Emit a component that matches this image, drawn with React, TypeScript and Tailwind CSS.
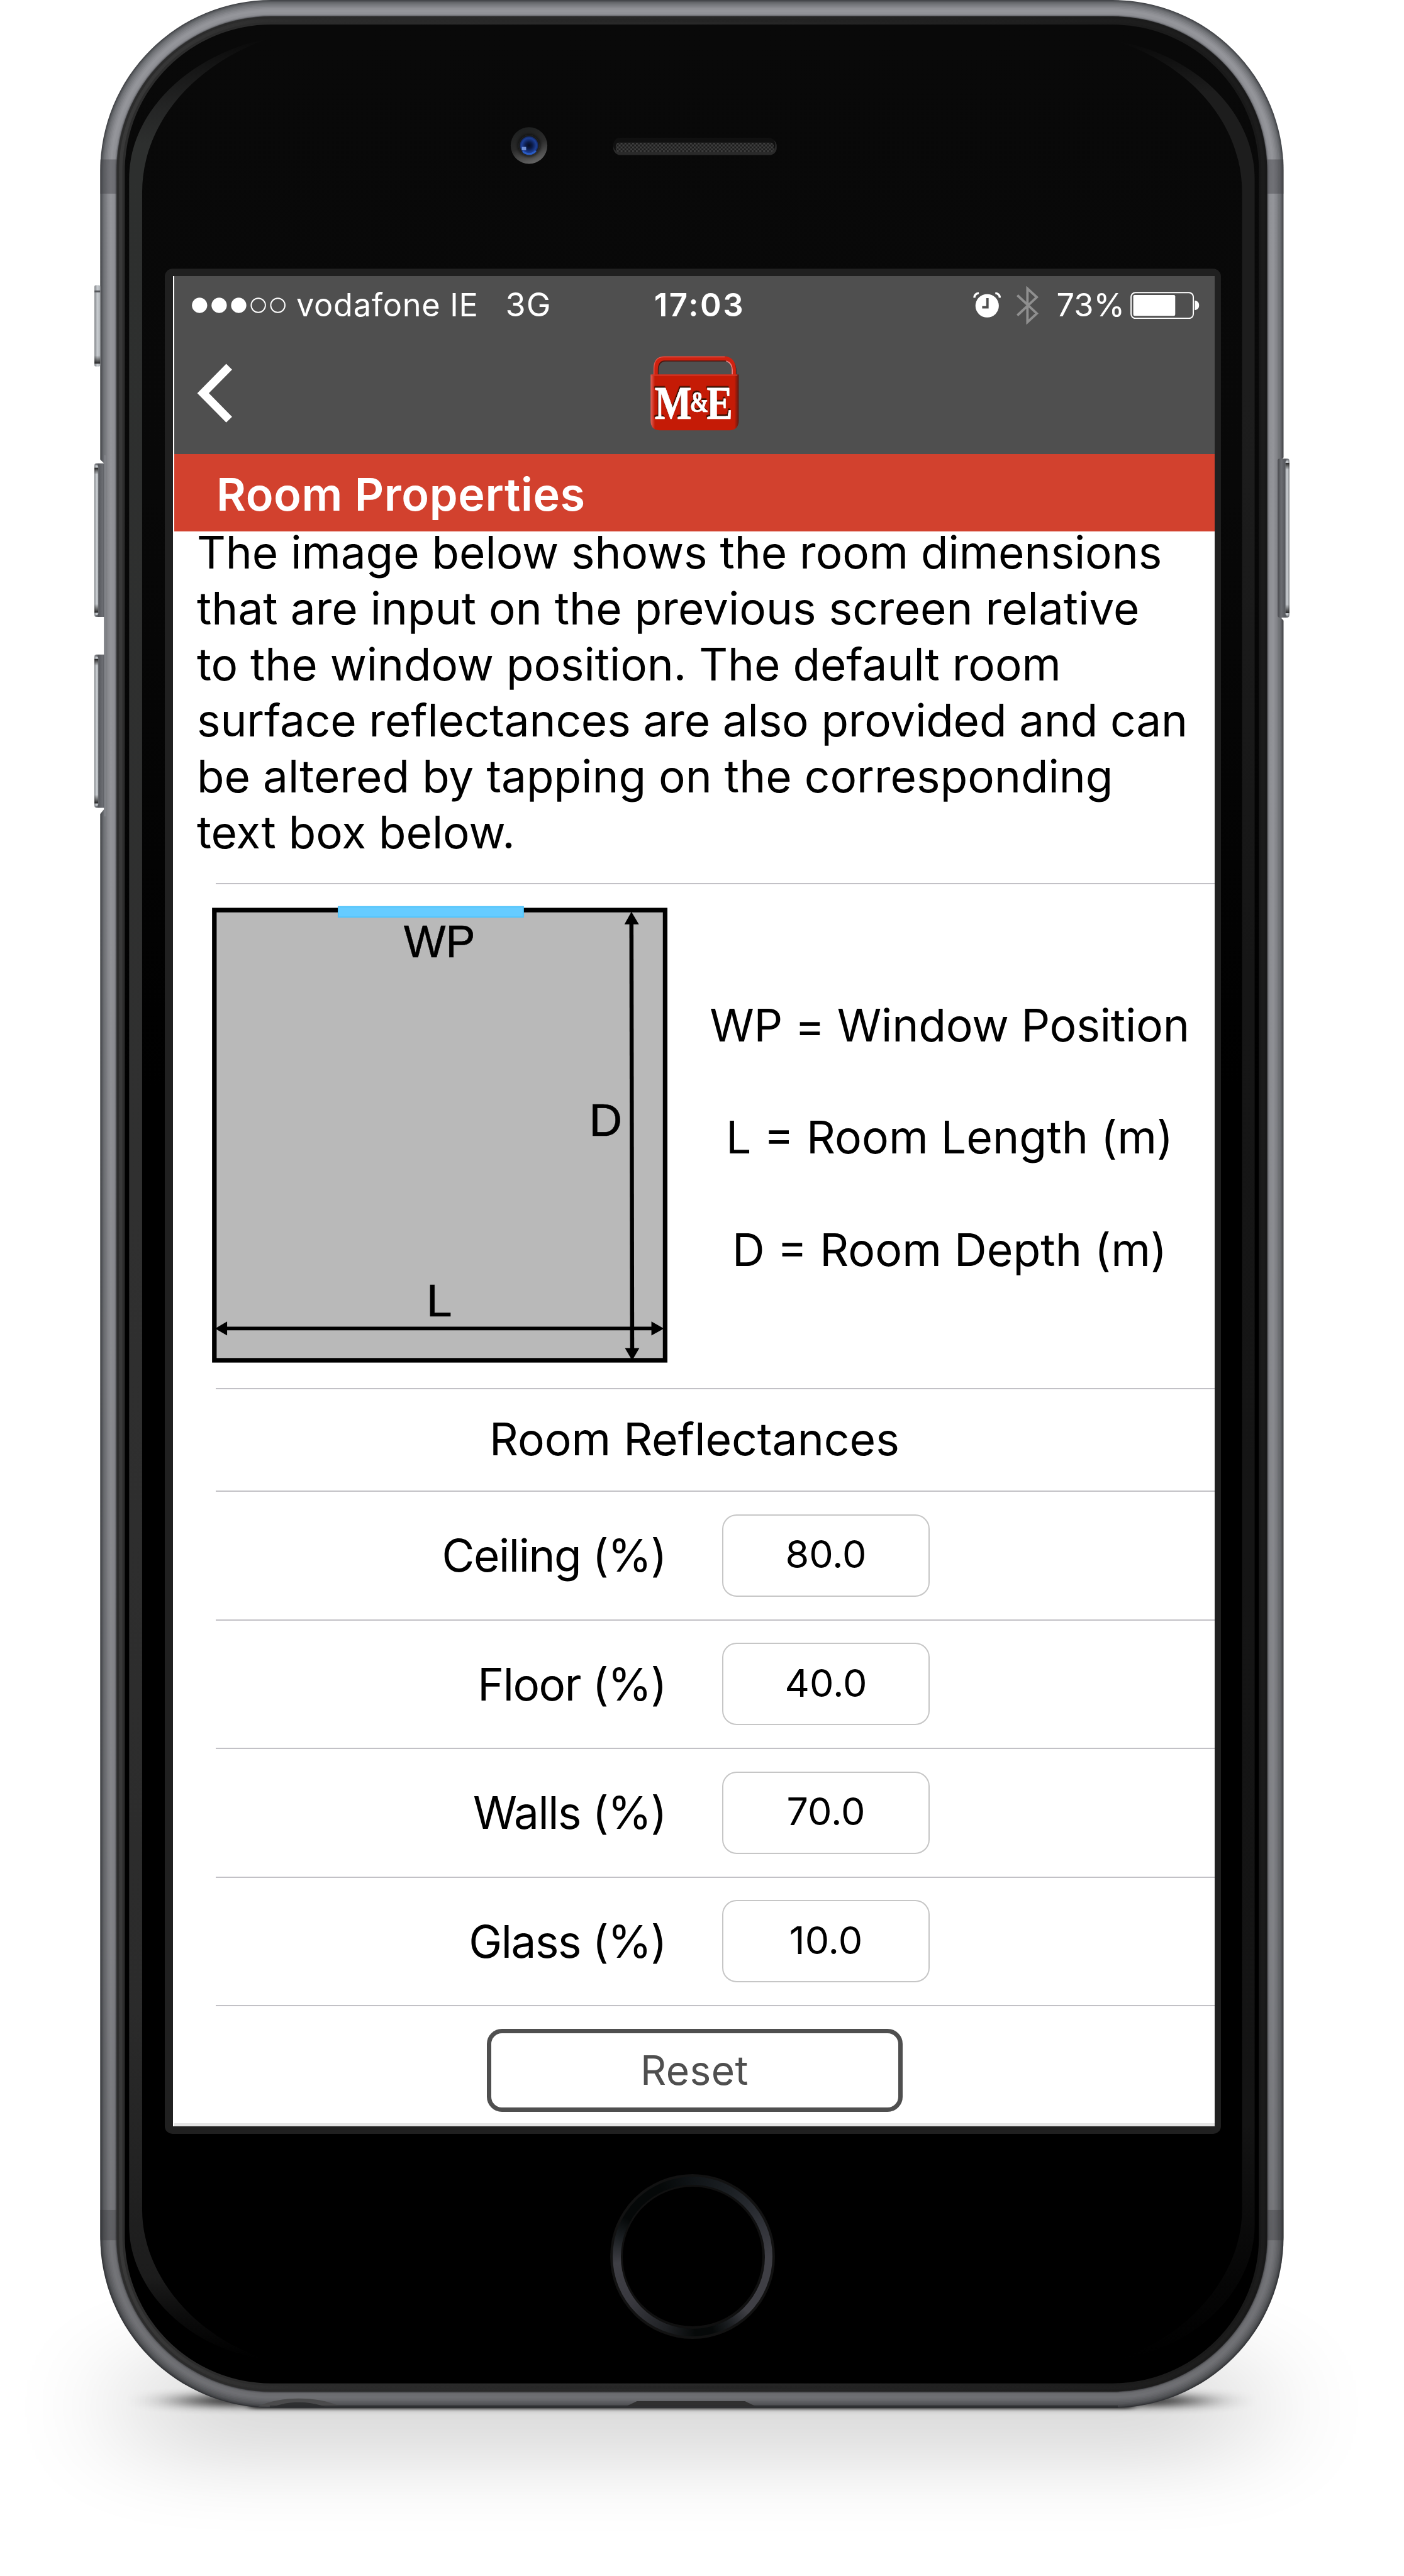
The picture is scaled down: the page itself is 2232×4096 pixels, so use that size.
import type { ReactNode } from "react";

const reflectances = [
  { label: "Ceiling (%)", value: "80.0" },
  { label: "Floor (%)", value: "40.0" },
  { label: "Walls (%)", value: "70.0" },
  { label: "Glass (%)", value: "10.0" },
];

// Metal rim shading, from the outer edge inwards: [inset, colour]
const rim: [number, string][] = [
  [0, "#434549"],
  [2, "#55575b"],
  [4, "#626468"],
  [6, "#6c6e72"],
  [8, "#75777b"],
  [11, "#7f8085"],
  [14, "#88898e"],
  [17, "#8f9095"],
  [20, "#94959a"],
  [25, "#919297"],
  [29, "#8a8b90"],
  [31, "#77787d"],
  [33, "#4c4d50"],
];

function RoundedLayer({ inset, fill }: { inset: number; fill: string }) {
  return (
    <rect
      x={208 + inset}
      y={inset}
      width={2456 - inset * 2}
      height={4999 - inset * 2}
      rx={355 - inset}
      fill={fill}
    />
  );
}

function SideButton({ x, y, h, flip }: { x: number; y: number; h: number; flip?: boolean }) {
  return (
    <g transform={flip ? `translate(${x + 20} ${y}) scale(-1 1)` : `translate(${x} ${y})`}>
      <rect x="0" y="0" width="24" height={h} rx="4" fill="url(#btnBase)" />
      <rect x="0" y="4" width="8" height={h - 8} rx="3" fill="url(#btnFace)" />
      <rect x="0" y="9" width="8" height="14" fill="url(#btnCapTop)" />
      <rect x="0" y={h - 27} width="8" height="18" fill="url(#btnCapBottom)" />
    </g>
  );
}

function Chassis() {
  return (
    <svg className="absolute inset-0 h-[4096px] w-[2232px]" viewBox="0 0 2914 5348" preserveAspectRatio="none" aria-hidden="true">
      <defs>
        <linearGradient id="rimShade" x1="0" y1="0" x2="0" y2="1">
          <stop offset="0" stopColor="#000" stopOpacity="0" />
          <stop offset="0.35" stopColor="#000" stopOpacity="0.02" />
          <stop offset="0.8" stopColor="#000" stopOpacity="0.13" />
          <stop offset="1" stopColor="#000" stopOpacity="0.26" />
        </linearGradient>
        <linearGradient id="ring" x1="0" y1="0" x2="1" y2="0">
          <stop offset="0" stopColor="#2c2c2c" />
          <stop offset="0.5" stopColor="#282828" />
          <stop offset="1" stopColor="#181818" />
        </linearGradient>
        <linearGradient id="ringMid" x1="0" y1="0" x2="1" y2="0">
          <stop offset="0" stopColor="#393939" />
          <stop offset="0.15" stopColor="#2c2c2c" />
          <stop offset="1" stopColor="#1b1b1b" />
        </linearGradient>
        <linearGradient id="glass" x1="0" y1="0" x2="0" y2="1">
          <stop offset="0" stopColor="#090909" />
          <stop offset="0.2" stopColor="#080808" />
          <stop offset="0.45" stopColor="#000" />
          <stop offset="1" stopColor="#000" />
        </linearGradient>
        <linearGradient id="glowLeft" gradientUnits="userSpaceOnUse" x1="0" y1="80" x2="0" y2="4897">
          <stop offset="0" stopColor="#303030" stopOpacity="0" />
          <stop offset="0.03" stopColor="#2b2c2c" stopOpacity="0.8" />
          <stop offset="0.045" stopColor="#2d2f2e" />
          <stop offset="0.5" stopColor="#303030" />
          <stop offset="0.85" stopColor="#2b2b2b" />
          <stop offset="0.965" stopColor="#1c1c1c" />
          <stop offset="1" stopColor="#101010" stopOpacity="0" />
        </linearGradient>
        <linearGradient id="glowRight" gradientUnits="userSpaceOnUse" x1="0" y1="85" x2="0" y2="4897">
          <stop offset="0" stopColor="#1e1e1e" stopOpacity="0" />
          <stop offset="0.022" stopColor="#1d1d1d" />
          <stop offset="0.15" stopColor="#1d1d1d" />
          <stop offset="0.4" stopColor="#161616" />
          <stop offset="0.9" stopColor="#141414" />
          <stop offset="1" stopColor="#101010" stopOpacity="0" />
        </linearGradient>
        <linearGradient id="btnBase" x1="0" y1="0" x2="1" y2="0">
          <stop offset="0" stopColor="#8c8f94" />
          <stop offset="0.35" stopColor="#55575c" />
          <stop offset="0.7" stopColor="#6b6d72" />
          <stop offset="1" stopColor="#4a4b4f" />
        </linearGradient>
        <linearGradient id="btnFace" x1="0" y1="0" x2="1" y2="0">
          <stop offset="0" stopColor="#7f8286" />
          <stop offset="0.5" stopColor="#c9cdd1" />
          <stop offset="1" stopColor="#aeb2b6" />
        </linearGradient>
        <linearGradient id="btnCapTop" x1="0" y1="0" x2="0" y2="1">
          <stop offset="0" stopColor="#222" />
          <stop offset="1" stopColor="#222" stopOpacity="0" />
        </linearGradient>
        <linearGradient id="btnCapBottom" x1="0" y1="0" x2="0" y2="1">
          <stop offset="0" stopColor="#222" stopOpacity="0" />
          <stop offset="1" stopColor="#222" />
        </linearGradient>
        <linearGradient id="cameraRing" x1="0.3" y1="0" x2="0.65" y2="1">
          <stop offset="0" stopColor="#1d1f1f" />
          <stop offset="0.5" stopColor="#2b2b2b" />
          <stop offset="1" stopColor="#666" />
        </linearGradient>
        <radialGradient id="lens">
          <stop offset="0" stopColor="#060b1c" />
          <stop offset="0.35" stopColor="#0b1a45" />
          <stop offset="0.8" stopColor="#1d3f96" />
          <stop offset="1" stopColor="#13275c" />
        </radialGradient>
        <pattern id="mesh" width="8" height="8" patternUnits="userSpaceOnUse">
          <rect width="8" height="8" fill="#1c1c1c" />
          <rect width="4" height="4" fill="#3f3f3f" />
          <rect x="4" y="4" width="4" height="4" fill="#3f3f3f" />
        </pattern>
        <filter id="floorBlur" x="-30%" y="-200%" width="160%" height="500%">
          <feGaussianBlur stdDeviation="130 82" />
        </filter>
        <filter id="contactBlur" x="-20%" y="-400%" width="140%" height="900%">
          <feGaussianBlur stdDeviation="60 9" />
        </filter>
        <filter id="edgeBlur" x="-20%" y="-400%" width="140%" height="900%">
          <feGaussianBlur stdDeviation="10 3" />
        </filter>
        <filter id="lensBlur" x="-30%" y="-30%" width="160%" height="160%">
          <feGaussianBlur stdDeviation="4" />
        </filter>
      </defs>

      {/* Shadows on the floor */}
      <rect x="280" y="4890" width="2310" height="215" fill="#000" opacity="0.155" filter="url(#floorBlur)" />
      <rect x="390" y="4974" width="2090" height="20" fill="#000" opacity="0.95" filter="url(#contactBlur)" />
      <rect x="520" y="4990" width="1830" height="11" fill="#000" opacity="0.7" filter="url(#edgeBlur)" />

      {/* Body */}
      {rim.map(([inset, fill]) => (
        <RoundedLayer key={inset} inset={inset} fill={fill} />
      ))}
      <RoundedLayer inset={0} fill="url(#rimShade)" />
      <rect x="208" y="331" width="35" height="71" fill="#3b3d40" opacity="0.4" />
      <rect x="2630" y="331" width="34" height="71" fill="#3b3d40" opacity="0.4" />
      <rect x="208" y="4588" width="35" height="63" fill="#2e2f33" opacity="0.3" />
      <rect x="2630" y="4588" width="34" height="63" fill="#2e2f33" opacity="0.3" />
      <path d="M536 4996 C580 4974 660 4974 706 4996 Z" fill="#4b4b4c" />
      <path d="M566 4997 C600 4984 640 4984 676 4997 Z" fill="#2f3031" />
      <path d="M1299 4996 L1322 4985 H1546 L1569 4996 Z" fill="#303030" />
      <rect x="560" y="4994" width="1760" height="5" fill="#2c2d2f" opacity="0.8" />

      {/* Side keys */}
      <path d="M206 952 L216 962 V1680 L206 1692 Z" fill="#fff" />
      <path d="M2666 948 L2660 954 V1284 L2666 1290 Z" fill="#fff" />
      <g>
        <rect x="196" y="592" width="12" height="169" rx="3" fill="url(#btnFace)" />
        <rect x="196" y="603" width="12" height="4" fill="#55575b" />
        <rect x="196" y="738" width="12" height="17" fill="url(#btnCapBottom)" />
      </g>
      <SideButton x={196} y={962} h={319} />
      <SideButton x={196} y={1359} h={318} />
      <rect x="216" y="945" width="5" height="750" fill="#808287" />
      <SideButton x={2656} y={952} h={330} flip />

      {/* Glass front */}
      <RoundedLayer inset={34} fill="url(#ring)" />
      <RoundedLayer inset={39} fill="url(#ringMid)" />
      <RoundedLayer inset={46} fill="url(#ring)" />
      <RoundedLayer inset={51} fill="url(#glass)" />
      <path
        d="M268 4621 V372 C268 230 395 112 560 79 C410 130 295 250 295 400 V4587 C295 4720 400 4850 555 4899 C380 4875 268 4745 268 4621 Z"
        fill="url(#glowLeft)"
      />
      <path
        d="M2604 4621 V372 C2604 230 2477 112 2312 84 C2462 130 2578 250 2578 400 V4587 C2578 4720 2472 4850 2317 4899 C2492 4875 2604 4745 2604 4621 Z"
        fill="url(#glowRight)"
      />

      {/* Camera and earpiece */}
      <circle cx="1098" cy="302" r="38" fill="url(#cameraRing)" />
      <circle cx="1098" cy="302" r="22" fill="#0d0e10" filter="url(#lensBlur)" />
      <circle cx="1098" cy="302" r="19" fill="url(#lens)" />
      <path d="M1085 314 A18 18 0 0 0 1112 313" fill="none" stroke="#2a5cc4" strokeWidth="4" />
      <rect x="1083" y="305" width="9" height="7" fill="#6f8fd6" />
      <rect x="1273" y="288" width="339" height="34" rx="15" fill="#2a2a2a" />
      <rect x="1273" y="286" width="336" height="30" rx="14" fill="#101010" />
      <rect x="1278" y="296" width="328" height="20" rx="7" fill="url(#mesh)" />

      {/* Bezel round the display */}
      <rect x="342" y="558" width="2192" height="3872" rx="16" fill="#202020" />
    </svg>
  );
}

function HomeButton() {
  return (
    <div className="absolute top-[3457px] left-[970px] flex size-[262px] items-center justify-center rounded-full bg-[#121212]">
      <div className="flex size-[254px] items-center justify-center rounded-full bg-[conic-gradient(#101417_0deg,#1c2024_30deg,#303238_65deg,#3f3f45_90deg,#3f3f45_135deg,#1a1d20_152deg,#060909_165deg,#060909_178deg,#1f2124_200deg,#3a3a40_235deg,#3f3f45_265deg,#1a1e21_285deg,#050808_300deg,#050808_335deg,#101417_360deg)]">
        <div className="flex size-[229px] items-center justify-center rounded-full bg-[#101010]">
          <div className="size-[222px] rounded-full bg-black" />
        </div>
      </div>
    </div>
  );
}

function SignalDots() {
  return (
    <svg className="h-[25px] w-[149px]" viewBox="0 0 194 32" aria-hidden="true">
      {[16, 56.5, 97].map((cx) => (
        <circle key={cx} cx={cx} cy="16" r="15.8" fill="#fff" />
      ))}
      {[137.5, 178].map((cx) => (
        <circle key={cx} cx={cx} cy="16" r="14.7" fill="none" stroke="#fff" strokeWidth="2.4" />
      ))}
    </svg>
  );
}

function AlarmIcon() {
  return (
    <svg className="h-[43px] w-[44px]" viewBox="2021 605 58 56" fill="none" aria-hidden="true">
      <circle cx="2050.4" cy="634" r="24.5" fill="#fff" />
      <path d="M2051 618 V637 H2040" stroke="#4f4f4f" strokeWidth="5" />
      <path d="M2023.5 617 C2024 611 2027 608 2033 607.5" stroke="#fff" strokeWidth="4.5" />
      <path d="M2077 617 C2076.5 611 2073.5 608 2067.5 607.5" stroke="#fff" strokeWidth="4.5" />
    </svg>
  );
}

function BluetoothIcon() {
  return (
    <svg className="h-[61px] w-[36px]" viewBox="2110 593 47 80" fill="none" aria-hidden="true">
      <path d="M2113 612 L2153.5 650 L2134 668 V598 L2153.5 616 L2113 654" stroke="#8f8f8f" strokeWidth="5" />
    </svg>
  );
}

function BatteryIcon() {
  return (
    <svg className="h-[43px] w-[110px]" viewBox="2347 605 143.5 56" fill="none" aria-hidden="true">
      <rect x="2348.5" y="606.5" width="129" height="53.5" rx="9" stroke="#fff" strokeWidth="2.6" />
      <rect x="2353" y="611.5" width="87" height="43.5" rx="3" fill="#fff" />
      <path d="M2480.5 623 C2487 624 2489.5 628 2489.5 633 C2489.5 638 2487 642 2480.5 643 Z" fill="#fff" />
    </svg>
  );
}

function Logo() {
  return (
    <svg className="h-[122px] w-[144px]" viewBox="1348 736 188 159" aria-hidden="true">
      <defs>
        <linearGradient id="logoEdge" x1="0" y1="0" x2="1" y2="0">
          <stop offset="0" stopColor="#e2635a" />
          <stop offset="0.05" stopColor="#c51b06" />
          <stop offset="0.95" stopColor="#c51b06" />
          <stop offset="1" stopColor="#5c1a12" />
        </linearGradient>
        <filter id="letterShadow" x="-10%" y="-20%" width="120%" height="140%">
          <feDropShadow dx="-1.5" dy="-3.5" stdDeviation="1" floodColor="#2d0703" floodOpacity="0.95" />
        </filter>
      </defs>
      <path d="M1363.5 782 V770 C1363.5 754 1371 746 1382 746 H1506 C1517 746 1525 754 1525 770 V782" fill="none" stroke="#4d1710" strokeWidth="8" />
      <path d="M1361.5 780 V768 C1361.5 751 1369 743.5 1380 743.5 H1504 C1515 743.5 1523.5 751 1523.5 768 V780" fill="none" stroke="#cf2210" strokeWidth="9" />
      <path d="M1358 778 V764 C1358 748 1366 740.5 1378 740.5 H1505" fill="none" stroke="#e2544a" strokeWidth="2" />
      <path d="M1520.5 778 V768 C1520.5 758 1516 752 1508 749" fill="none" stroke="#e88" strokeWidth="2" />
      <path d="M1351 777 H1534 V873 C1534 886 1526 893 1515 893 H1370 C1358 893 1351 886 1351 873 Z" fill="url(#logoEdge)" />
      <rect x="1353" y="777" width="178" height="2.5" fill="#d83a2a" />
      <g fontFamily="'Liberation Serif', serif" fontWeight="700" fill="#fff" stroke="#fff" strokeWidth="0.8" filter="url(#letterShadow)">
        <text x="1359.5" y="868.5" fontSize="98" textLength="77" lengthAdjust="spacingAndGlyphs">M</text>
        <text x="1432.5" y="855" fontSize="61" textLength="39" lengthAdjust="spacingAndGlyphs">&amp;</text>
        <text x="1467.5" y="868.5" fontSize="98" textLength="54" lengthAdjust="spacingAndGlyphs">E</text>
      </g>
    </svg>
  );
}

function RoomDiagram() {
  return (
    <svg className="h-[735px] w-[728px] shrink-0" viewBox="440 1875 950 960" aria-label="Room plan">
      <rect x="444.5" y="1889.5" width="936" height="935" fill="#b9b9b9" stroke="#000" strokeWidth="9.5" />
      <rect x="702" y="1882.5" width="384" height="21.5" fill="#66ccff" stroke="#51c4fb" strokeWidth="2.5" />
      <g stroke="#000" fill="#000">
        <path d="M1310.5 1910 L1312 2808" strokeWidth="8.5" />
        <path d="M1310.5 1893 L1296 1919 H1326 Z" stroke="none" />
        <path d="M1312 2825 L1297 2799 H1327 Z" stroke="none" />
        <path d="M462 2758.5 H1362" strokeWidth="7.5" />
        <path d="M446 2758.5 L471 2744 V2773 Z" stroke="none" />
        <path d="M1378 2758.5 L1352 2744 V2773 Z" stroke="none" />
      </g>
      <g fontFamily="'Liberation Sans', Arial, sans-serif" fontSize="95" fill="#000" stroke="#000" strokeWidth="0.8">
        <text x="838" y="1987" textLength="148" lengthAdjust="spacingAndGlyphs">WP</text>
        <text x="1222.5" y="2358">D</text>
        <text x="885" y="2733.5">L</text>
      </g>
    </svg>
  );
}

function Divider() {
  return <div className="ml-[66px] h-[2px] bg-[#c2c1c6]" />;
}

function LegendLine({ children }: { children: ReactNode }) {
  return <p className="text-[71.6px] leading-[178.4px] whitespace-nowrap">{children}</p>;
}

export default function App() {
  return (
    <div className="relative h-[4096px] w-[2232px] overflow-hidden bg-white pt-[439px] pl-[275px] font-['Inter',sans-serif] text-black">
      <Chassis />
      <HomeButton />

      <main className="relative flex h-[2942px] w-[1656px] flex-col overflow-hidden bg-white pl-[2px]">
        <header className="h-[283px] bg-[#4f4f4f] text-white">
          <div className="grid h-[92px] grid-cols-[1fr_auto_1fr] items-center text-[50.5px] whitespace-nowrap">
            <div className="flex items-center pl-[28px]">
              <SignalDots />
              <span className="ml-[17px] tracking-[0.7px]">vodafone IE</span>
              <span className="ml-[43px] text-[52px] tracking-[1px]">3G</span>
            </div>
            <span className="pl-[16px] text-[51px] font-semibold tracking-[2.6px]">17:03</span>
            <div className="flex items-center justify-end pr-[24px]">
              <AlarmIcon />
              <span className="ml-[24px]">
                <BluetoothIcon />
              </span>
              <span className="ml-[28px]">73%</span>
              <span className="ml-[9px]">
                <BatteryIcon />
              </span>
            </div>
          </div>
          <nav className="grid h-[191px] grid-cols-[1fr_auto_1fr] items-center pb-[3px]">
            <svg className="ml-[35px] h-[96px] w-[60px]" viewBox="408 753 78 125" fill="none" aria-label="Back">
              <path d="M476 761 L422 815.7 L476 870.5" stroke="#fff" strokeWidth="17" />
            </svg>
            <Logo />
            <span />
          </nav>
        </header>

        <h1 className="flex h-[123px] items-center bg-[#d2412e] pt-[4px] pl-[67px] text-[72px] font-semibold tracking-[0.6px] text-white">
          Room Properties
        </h1>

        <section className="h-[559px]">
          <p className="-mt-[11px] pl-[36px] text-[71.1px] leading-[89px] tracking-[-0.03px] whitespace-nowrap">
            The image below shows the room dimensions
            <br />
            <span className="tracking-[0.04px]">that are input on the previous screen relative</span>
            <br />
            to the window position. The default room
            <br />
            <span className="tracking-[-0.14px]">surface reflectances are also provided and can</span>
            <br />
            <span className="tracking-[0.04px]">be altered by tapping on the corresponding</span>
            <br />
            text box below.
          </p>
        </section>

        <Divider />
        <section className="flex h-[801px] pt-[30px] pl-[60px]">
          <RoomDiagram />
          <div className="mt-[105px] flex flex-1 flex-col items-center pl-[23px]">
            <LegendLine>
              <span className="tracking-[-0.25px]">WP = Window Position</span>
            </LegendLine>
            <LegendLine>L = Room Length (m)</LegendLine>
            <LegendLine>D = Room Depth (m)</LegendLine>
          </div>
        </section>

        <Divider />
        <h2 className="h-[161px] text-center text-[71.4px] leading-[158px]">Room Reflectances</h2>

        {reflectances.map(({ label, value }) => (
          <div key={label} className="h-[204.5px]">
            <Divider />
            <div className="flex h-[202.5px] items-center">
              <span className="w-[782px] text-right text-[71px] tracking-[-1.4px]">{label}</span>
              <div className="ml-[89px] flex h-[131px] w-[330px] items-center justify-center rounded-[23px] border-2 border-[#c6c6c6] pb-[3px] text-[61px]">
                {value}
              </div>
            </div>
          </div>
        ))}

        <Divider />
        <div className="flex flex-1 justify-center pt-[36px]">
          <button className="h-[132px] w-[661px] rounded-[24px] border-[7px] border-[#4f4f4f] text-[64px] leading-none tracking-[0.5px] text-[#4f4f4f]">
            Reset
          </button>
        </div>
        <div className="h-[5px] shrink-0 bg-[#e5e5e5]" />
      </main>
    </div>
  );
}
